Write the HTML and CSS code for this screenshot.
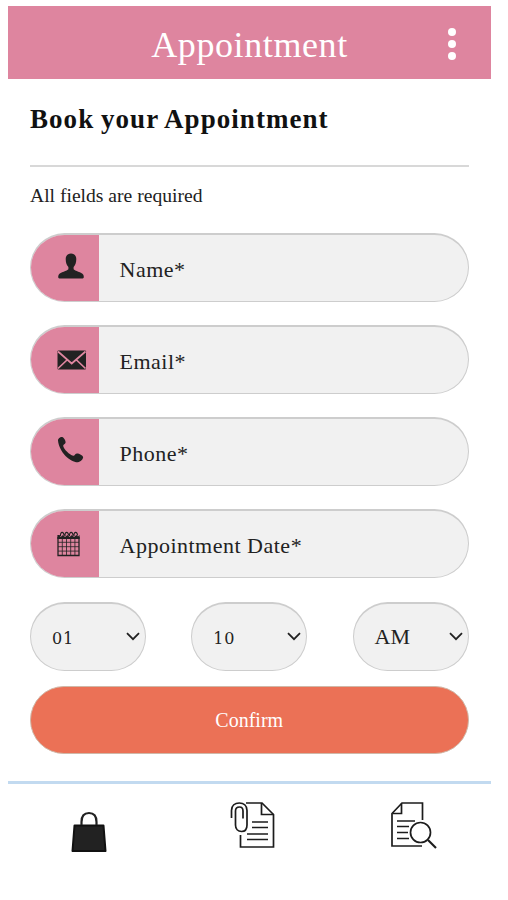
FILE: index.html
```
<!DOCTYPE html>
<html lang="en">
<head>
<meta charset="utf-8">
<meta name="viewport" content="width=device-width, initial-scale=1">
<title>Appointment</title>
<link rel="stylesheet" href="styles.css">
</head>
<body>
<div class="app">
  <header class="topbar">
    <h1 class="topbar-title">Appointment</h1>
    <div class="menu"><i></i><i></i><i></i></div>
  </header>
  <main class="content">
    <h2 class="heading">Book your Appointment</h2>
    <p class="note">All fields are required</p>
    <div class="fields">
      <div class="field">
        <div class="field-icon">
          <svg width="28" height="26" viewBox="0 0 28 26"><path fill="#222" d="M14 .5c3.3 0 5.300 2.200 5.300 5.500 0 3.500-1 6.500-2.700 8v2.300c1 1.700 8.200 2.800 9.700 5.500.7 1.200.8 3.700-.7 3.700H2.400C.9 25.500 1 23 1.700 21.800c1.500-2.700 8.700-3.800 9.700-5.500V14c-1.700-1.500-2.700-4.500-2.700-8 0-3.300 2-5.500 5.300-5.500z"/></svg>
        </div>
        <div class="field-label">Name*</div>
      </div>
      <div class="field">
        <div class="field-icon field-icon-mail">
          <svg width="30" height="20" viewBox="0 0 30 20"><rect x=".5" y=".5" width="28.500" height="19" rx="1" fill="#222"/><path d="M1 1.500l13.700 12L28.500 1.500M1 18.500l9-8.500M28.500 18.500l-9-8.500" fill="none" stroke="#df86a0" stroke-width="1.700"/></svg>
        </div>
        <div class="field-label">Email*</div>
      </div>
      <div class="field">
        <div class="field-icon">
          <svg width="28" height="28" viewBox="0 0 28 28"><path fill="#222" d="M1 4.500C.8 2.500 3.500.6 5.200 1c1.600.5 3.600 3.600 3.400 5.500C8.500 8 5.900 8.500 6.200 9.900c.9 3.600 6.300 8.700 10 9.800 1.400.4 2-2.200 3.900-2.200 2.200.1 5.700 1.900 6 3.600.3 2-2.600 4.900-5.300 5.100-3.400.2-8.500-2.500-12.300-6.300C4.400 15.800 1.400 9.500 1 4.500z"/></svg>
        </div>
        <div class="field-label">Phone*</div>
      </div>
      <div class="field">
        <div class="field-icon field-icon-date">
          <svg width="23" height="26" viewBox="0 0 23 26"><g fill="none" stroke="#222"><path stroke-width="1.300" d="M1 6v18.500h21V6"/><path stroke-width=".8" d="M5.300 7v17.500M9.500 7v17.500M13.700 7v17.500M17.900 7v17.500M1 11.300h21M1 15.700h21M1 20.100h21"/><path stroke-width="1.100" d="M3.500 5c-.4-4.800 3.500-4.800 3.500-.5M8 5c-.4-4.800 3.500-4.800 3.500-.5M12.500 5c-.4-4.800 3.500-4.800 3.500-.5M17 5c-.4-4.800 3.500-4.800 3.500-.5"/></g><path fill="#222" d="M.4 4h2.200l1 2 2.400-2 2 2 2.500-2 2 2 2.500-2 2 2 2.500-2 1.500 1.500L22.600 4v4H.4z"/></svg>
        </div>
        <div class="field-label">Appointment Date*</div>
      </div>
    </div>
    <div class="selects">
      <div class="select"><span class="digits">01</span><svg width="14" height="9" viewBox="0 0 14 9"><path d="M1 1.200l6 6 6-6"/></svg></div>
      <div class="select"><span class="digits">10</span><svg width="14" height="9" viewBox="0 0 14 9"><path d="M1 1.200l6 6 6-6"/></svg></div>
      <div class="select"><span class="period">AM</span><svg width="14" height="9" viewBox="0 0 14 9"><path d="M1 1.200l6 6 6-6"/></svg></div>
    </div>
    <div class="confirm">Confirm</div>
  </main>
  <nav class="tabs">
    <div class="tab">
      <svg width="36" height="42" viewBox="0 0 36 42"><path d="M3.500 14.500h29L34.500 40h-33z" fill="#222" stroke="#111" stroke-width="2" stroke-linejoin="round"/><path d="M10.500 14V11q0-9 7.500-9t7.500 9v3" fill="none" stroke="#222" stroke-width="2.200"/></svg>
    </div>
    <div class="tab tab-doc">
      <svg width="46" height="48" viewBox="0 0 46 48" fill="none" stroke="#1c1c1c" stroke-width="1.700"><path d="M16 2h16l11.500 11.500V46H10.500V34"/><path d="M31.500 2v11.500h12"/><path d="M22 21h16M22 26.500h16M17 33h21M17 38.500h21"/><path d="M1.500 17V9.500C1.500 4.500 5 2 9.300 2s7.700 2.500 7.700 7.500V24c0 4.500-2 6.500-5.500 6.500S5.500 28 5.500 24V10c0-2.700 1.500-4 4-4s3.500 1.300 3.500 4v7.500"/></svg>
    </div>
    <div class="tab tab-doc">
      <svg width="47" height="48" viewBox="0 0 47 48" fill="none" stroke="#1c1c1c" stroke-width="1.700"><path d="M32.500 19V2H12L2 12.500V45h30"/><path d="M11.500 2.500v10H2.500"/><path d="M7 20h18M7 25.500h12M7 31.500h11M7 37.500h12"/><circle cx="30.500" cy="31.500" r="10"/><path stroke-width="2.200" d="M38 39l8 8"/></svg>
    </div>
  </nav>
</div>
</body>
</html>
```
FILE: styles.css
```
* { box-sizing: border-box; }

body {
  margin: 0;
  background: #fff;
  color: #222;
  font-family: "Liberation Serif", serif;
}

svg { display: block; flex: none; }

.app { width: 483px; margin: 6px 0 0 8px; }

.topbar {
  display: grid;
  grid-template-columns: 79px 1fr 79px;
  align-items: center;
  height: 73px;
  background: #de859f;
}

.topbar-title {
  grid-column: 2;
  margin: 4px 0 0;
  color: #fff;
  font-size: 36px;
  font-weight: 400;
  letter-spacing: 0.6px;
  line-height: 42px;
  text-align: center;
}

.menu {
  display: flex;
  flex-direction: column;
  align-items: center;
  gap: 4px;
  margin-top: 3px;
}

.menu i { width: 8px; height: 8px; border-radius: 50%; background: #fff; }

.content { padding: 0 22.500px 0 22px; }

.heading {
  height: 88px;
  margin: 0;
  padding-top: 25px;
  border-bottom: 2px solid #d8d8d8;
  color: #111;
  font-size: 27px;
  letter-spacing: 1.050px;
  word-spacing: -1px;
  line-height: 30px;
  white-space: nowrap;
}

.note {
  margin: 18px 0 0;
  font-size: 19.600px;
  line-height: 22px;
}

.fields { display: grid; gap: 23.300px; margin-top: 25.500px; }

.field {
  display: flex;
  height: 69px;
  overflow: hidden;
  border: 1.500px solid #cdcdcd;
  border-top-width: 2px;
  border-radius: 35px;
  background: #f1f1f1;
}

.field-icon {
  display: flex;
  align-items: center;
  width: 68px;
  padding: 0 0 4px 26px;
  background: #de859f;
}

.field-icon-mail { padding-bottom: 0; }
.field-icon-date { padding-bottom: 0; }

.field-label {
  padding-left: 20.500px;
  font-size: 22px;
  letter-spacing: 0.500px;
  line-height: 69px;
}

.selects {
  display: grid;
  grid-template-columns: repeat(3, 116px);
  justify-content: space-between;
  margin-top: 23.500px;
}

.select {
  display: flex;
  align-items: center;
  justify-content: space-between;
  height: 69px;
  padding: 0 5px 0 21px;
  border: 1.500px solid #cdcdcd;
  border-top-width: 2px;
  border-radius: 35px;
  background: #f1f1f1;
}

.select path { fill: none; stroke: #222; stroke-width: 1.800; }

.digits {
  padding-top: 3px;
  font-family: "DejaVu Serif", serif;
  font-size: 16px;
  letter-spacing: 0.800px;
}

.period { padding-top: 1px; font-size: 22px; }

.confirm {
  height: 68px;
  margin-top: 15.500px;
  border: 1.500px solid #d0b8a8;
  border-radius: 34px;
  background: #eb7156;
  color: #fff;
  font-size: 20px;
  line-height: 66px;
  text-align: center;
}

.tabs {
  display: grid;
  grid-template-columns: repeat(3, 1fr);
  height: 90px;
  margin-top: 27px;
  border-top: 3px solid #c2daf0;
}

.tab { display: flex; justify-content: center; padding-top: 27px; }

.tab-doc { padding: 17px 0 0 6px; }
```
